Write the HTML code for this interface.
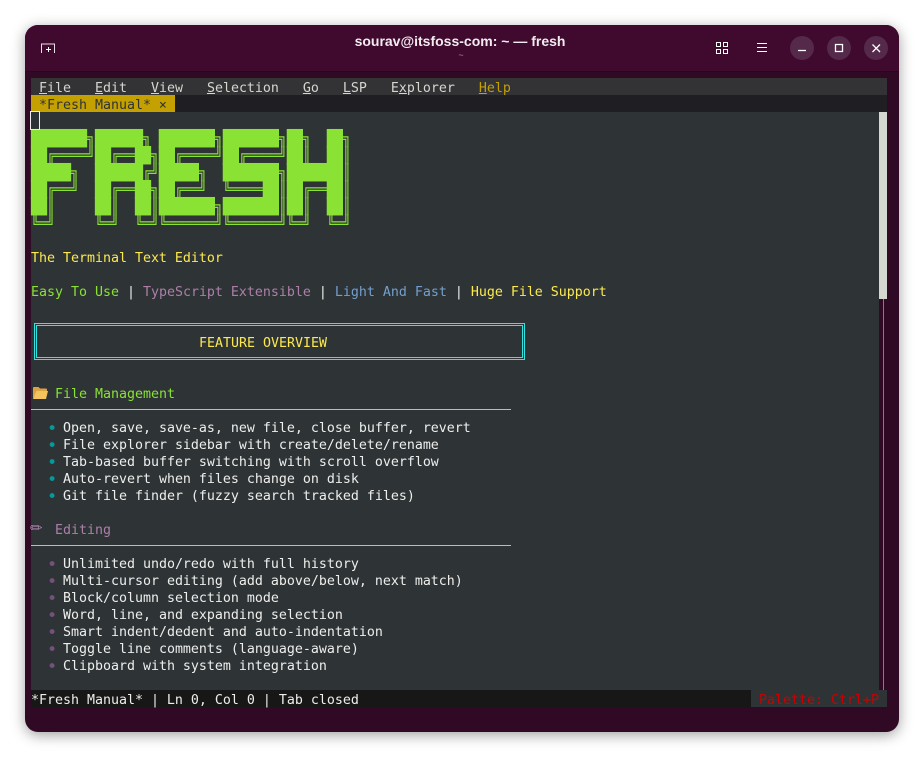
<!DOCTYPE html>
<html><head><meta charset="utf-8"><style>
html,body{margin:0;padding:0;background:#fff;width:924px;height:757px;overflow:hidden}
#win{position:absolute;left:25px;top:25px;width:874px;height:707px;border-radius:13px;background:#300a24;box-shadow:0 3px 14px rgba(0,0,0,.38);overflow:hidden}
#tb{position:absolute;left:0;top:0;width:874px;height:46px;background:#3f0a2e;border-bottom:1px solid #2a0720}
.r{position:absolute;left:31px;height:17px;font:13.29px/21px "DejaVu Sans Mono","Liberation Mono",monospace;white-space:pre;color:#eeeeec}
.bg{position:absolute}
u{text-underline-offset:1px}
.b1,.b2{display:inline-block;width:8px;text-align:center;font-size:17px;line-height:0;position:relative;top:2px}
.b1{color:#06989a}.b2{color:#75507b}
.cb{position:absolute;width:24px;height:24px;border-radius:50%;background:#55294a;top:36px}
.l{position:absolute;left:31px;height:17px;font:13.29px/17px "DejaVu Sans Mono",monospace;color:#8ae234;white-space:pre;transform-origin:0 8.4px;transform:scaleY(1.17)}
</style></head><body>
<div id="win"><div id="tb"></div></div>

<svg style="position:absolute;left:0;top:0" width="924" height="80" fill="none" stroke="#fff" stroke-width="1">
<path d="M41.5 53V44h13V53" stroke="#e8e0e6"/><path d="M46 49.5h5M48.5 47v5" stroke-width="1"/>
<path d="M716.5 42.5h4v4h-4zM723.5 42.5h4v4h-4zM716.5 49.5h4v4h-4zM723.5 49.5h4v4h-4z"/>
<path d="M757 43.5h10M757 47.5h10M757 51.5h10"/>
</svg>
<div class="cb" style="left:790px"></div><div class="cb" style="left:827px"></div><div class="cb" style="left:864px"></div>
<svg style="position:absolute;left:0;top:0" width="924" height="80" fill="none" stroke="#fff" stroke-width="1.3">
<path d="M798 50.5h8"/><path d="M835.5 44.5h7v7h-7z"/><path d="M872.5 44.5l7.5 7.5M880 44.5l-7.5 7.5"/>
</svg>
<div style="position:absolute;left:354px;top:32px;width:212px;text-align:center;font:bold 14px/18px 'Liberation Sans',sans-serif;color:#f2ecf0;white-space:nowrap">sourav@itsfoss-com: ~ — fresh</div>
<div style="position:absolute;left:454px;top:49px;width:14px;text-align:center;font:9px/12px 'Liberation Sans',sans-serif;color:#a58a9c">~</div>

<div class="bg" style="left:31px;top:78px;width:856px;height:17px;background:#333336"></div>
<div class="bg" style="left:31px;top:95px;width:856px;height:17px;background:#1f1e22"></div>
<div class="bg" style="left:31px;top:95px;width:144px;height:17px;background:#c4a000"></div>
<div class="bg" style="left:31px;top:112px;width:848px;height:578px;background:#2e3436"></div>
<div class="bg" style="left:879px;top:112px;width:8px;height:187px;background:#d3d7cf"></div>
<div class="bg" style="left:883px;top:299px;width:1px;height:391px;background:#8a7a86"></div>
<div class="bg" style="left:31px;top:690px;width:720px;height:17px;background:#171717"></div>
<div class="bg" style="left:751px;top:690px;width:136px;height:17px;background:#2e3436"></div>

<div class="r" style="top:78px;color:#d3d7cf"> <u>F</u>ile   <u>E</u>dit   <u>V</u>iew   <u>S</u>election   <u>G</u>o   <u>L</u>SP   E<u>x</u>plorer   <span style="color:#c4a000"><u>H</u>elp</span></div>
<div class="r" style="top:95px;color:#2e3436"> *Fresh Manual* ×</div>

<div class="l" style="top:131px">███████╗██████╗ ███████╗███████╗██╗  ██╗</div>
<div class="l" style="top:148px">██╔════╝██╔══██╗██╔════╝██╔════╝██║  ██║</div>
<div class="l" style="top:165px">█████╗  ██████╔╝█████╗  ███████╗███████║</div>
<div class="l" style="top:182px">██╔══╝  ██╔══██╗██╔══╝  ╚════██║██╔══██║</div>
<div class="l" style="top:199px">██║     ██║  ██║███████╗███████║██║  ██║</div>
<div class="l" style="top:216px">╚═╝     ╚═╝  ╚═╝╚══════╝╚══════╝╚═╝  ╚═╝</div>
<div class="bg" style="left:30px;top:111px;width:8px;height:17px;border:1px solid #eeeeec;box-sizing:content-box"></div>

<div class="r" style="top:248px;color:#fce94f">The Terminal Text Editor</div>
<div class="r" style="top:282px"><span style="color:#8ae234">Easy To Use</span> | <span style="color:#ad7fa8">TypeScript Extensible</span> | <span style="color:#729fcf">Light And Fast</span> | <span style="color:#fce94f">Huge File Support</span></div>

<div class="bg" style="left:34px;top:323px;width:485px;height:31px;border:3px double #34e2e2"></div>
<div class="r" style="top:333px;left:199px;color:#fce94f">FEATURE OVERVIEW</div>

<svg style="position:absolute;left:32px;top:386px" width="17" height="14"><path d="M1 12.5V2Q1 1 2 1H6.5L8 2.5H14Q15 2.5 15 3.5V6H5L1 12.5Z" fill="#d9a441"/><path d="M1 13L4.5 5H16L14 13Z" fill="#f4c45e"/></svg>
<div class="r" style="top:384px;left:55px;color:#8ae234">File Management</div>
<div class="bg" style="left:31px;top:409px;width:480px;height:1px;background:#babdb6"></div>
<div class="r" style="top:418px">  <span class="b1">•</span> Open, save, save-as, new file, close buffer, revert</div>
<div class="r" style="top:435px">  <span class="b1">•</span> File explorer sidebar with create/delete/rename</div>
<div class="r" style="top:452px">  <span class="b1">•</span> Tab-based buffer switching with scroll overflow</div>
<div class="r" style="top:469px">  <span class="b1">•</span> Auto-revert when files change on disk</div>
<div class="r" style="top:486px">  <span class="b1">•</span> Git file finder (fuzzy search tracked files)</div>

<div style="position:absolute;left:30px;top:520px;font:15px/17px 'DejaVu Sans',sans-serif;color:#ad7fa8">✏</div>
<div class="r" style="top:520px;left:55px;color:#ad7fa8">Editing</div>
<div class="bg" style="left:31px;top:545px;width:480px;height:1px;background:#babdb6"></div>
<div class="r" style="top:554px">  <span class="b2">•</span> Unlimited undo/redo with full history</div>
<div class="r" style="top:571px">  <span class="b2">•</span> Multi-cursor editing (add above/below, next match)</div>
<div class="r" style="top:588px">  <span class="b2">•</span> Block/column selection mode</div>
<div class="r" style="top:605px">  <span class="b2">•</span> Word, line, and expanding selection</div>
<div class="r" style="top:622px">  <span class="b2">•</span> Smart indent/dedent and auto-indentation</div>
<div class="r" style="top:639px">  <span class="b2">•</span> Toggle line comments (language-aware)</div>
<div class="r" style="top:656px">  <span class="b2">•</span> Clipboard with system integration</div>

<div class="r" style="top:690px">*Fresh Manual* | Ln 0, Col 0 | Tab closed</div>
<div class="r" style="top:690px;left:759px;color:#cc0000">Palette: Ctrl+P</div>
</body></html>
